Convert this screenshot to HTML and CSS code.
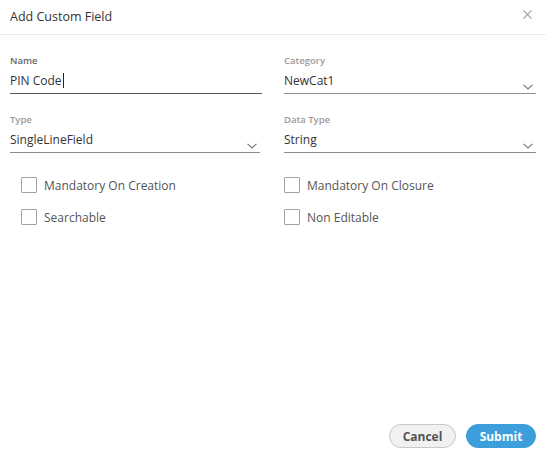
FILE: index.html
```html
<!DOCTYPE html>
<html>
<head>
<meta charset="utf-8">
<link rel="stylesheet" href="styles.css">
</head>
<body>
<div class="dialog">
  <div class="header">
    <span class="title">Add Custom Field</span>
    <span class="close">
      <svg width="9" height="9" viewBox="0 0 9 9"><path d="M0.5 0.5L8.5 8.5M8.5 0.5L0.5 8.5" stroke="#a6a6a6" stroke-width="1.1" fill="none"/></svg>
    </span>
  </div>
  <div class="body">
    <div class="grid">
      <div class="field focused">
        <div class="label">Name</div>
        <div class="input"><span class="value">PIN Code</span><span class="caret"></span></div>
      </div>
      <div class="field">
        <div class="label">Category</div>
        <div class="input"><span class="value">NewCat1</span>
          <svg class="chev" width="10" height="6" viewBox="0 0 10 6"><path d="M0.5 0.8L5 5L9.5 0.8" stroke="#777" stroke-width="1.1" fill="none"/></svg>
        </div>
      </div>
      <div class="field narrow">
        <div class="label">Type</div>
        <div class="input"><span class="value">SingleLineField</span>
          <svg class="chev" width="10" height="6" viewBox="0 0 10 6"><path d="M0.5 0.8L5 5L9.5 0.8" stroke="#777" stroke-width="1.1" fill="none"/></svg>
        </div>
      </div>
      <div class="field">
        <div class="label">Data Type</div>
        <div class="input"><span class="value">String</span>
          <svg class="chev" width="10" height="6" viewBox="0 0 10 6"><path d="M0.5 0.8L5 5L9.5 0.8" stroke="#777" stroke-width="1.1" fill="none"/></svg>
        </div>
      </div>
    </div>
    <div class="checks">
      <label class="check indent"><span class="box"></span>Mandatory On Creation</label>
      <label class="check"><span class="box"></span>Mandatory On Closure</label>
      <label class="check indent"><span class="box"></span>Searchable</label>
      <label class="check"><span class="box"></span>Non Editable</label>
    </div>
  </div>
  <div class="footer">
    <button class="btn cancel">Cancel</button>
    <button class="btn submit">Submit</button>
  </div>
</div>
</body>
</html>
```
FILE: styles.css
```css
* { box-sizing: border-box; }
html, body { margin: 0; padding: 0; background: #fff; }
body { font-family: "Open Sans", "Noto Sans", sans-serif; color: #333; }
.dialog {
  width: 546px;
  height: 460px;
  display: flex;
  flex-direction: column;
  background: #fff;
}
.header {
  height: 35px;
  padding: 0 10px 0 10px;
  border-bottom: 1px solid #ececec;
  display: flex;
  align-items: center;
  justify-content: space-between;
}
.title { font-size: 12.5px; color: #333; position: relative; top: -1px; }
.close { display: flex; margin-right: 4px; position: relative; top: -3px; }
.body { flex: 1; padding: 19px 10px 0 10px; }
.grid {
  display: grid;
  grid-template-columns: 252px 252px;
  column-gap: 22px;
  row-gap: 19px;
}
.label {
  font-size: 9.5px;
  font-weight: 600;
  color: #9a9a9a;
  line-height: 14px;
  height: 14px;
}
.focused .label { color: #666; }
.input {
  height: 26px;
  border-bottom: 1px solid #8c8c8c;
  display: flex;
  align-items: center;
  font-size: 12px;
  color: #333;
  position: relative;
  padding-bottom: 0;
}
.narrow .input { margin-right: 2px; }
.focused .input { border-bottom-color: #555; }
.caret { display: inline-block; width: 1px; height: 15px; background: #222; margin-left: 1px; }
.chev { position: absolute; right: 3px; bottom: 3px; }
.narrow .chev { right: 3px; }
.checks {
  display: grid;
  grid-template-columns: 274px 252px;
  row-gap: 16px;
  margin-top: 24px;
}
.check {
  display: flex;
  align-items: center;
  height: 16px;
  font-size: 12px;
  color: #555;
}
.check.indent { padding-left: 11px; }
.box {
  width: 16px;
  height: 16px;
  border: 1px solid #a3a3a3;
  border-radius: 1px;
  margin-right: 7px;
  background: #fff;
}
.footer {
  display: flex;
  justify-content: flex-end;
  gap: 10px;
  padding: 0 10px 12px 0;
}
.btn {
  font-family: "Open Sans", "Noto Sans", sans-serif;
  font-weight: 700;
  font-size: 12px;
  height: 24px;
  border-radius: 12px;
  padding: 0;
  cursor: pointer;
}
.cancel {
  width: 67px;
  background: #f1f1f1;
  border: 1px solid #c8c8c8;
  color: #555;
}
.submit {
  width: 70px;
  background: #3c9fdb;
  border: 1px solid #3c9fdb;
  color: #fff;
}
```
